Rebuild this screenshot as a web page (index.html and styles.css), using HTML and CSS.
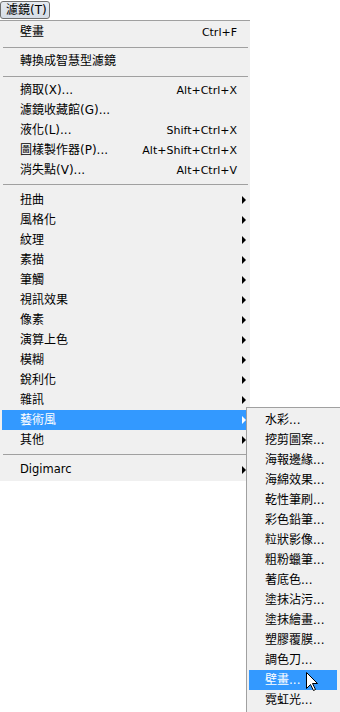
FILE: index.html
```html
<!DOCTYPE html>
<html lang="zh-Hant">
<head>
  <meta charset="UTF-8">
  <title>濾鏡</title>
  <link rel="stylesheet" href="styles.css">
</head>
<body>

  <div class="menubar">
    <span class="menubtn">濾鏡(T)</span>
  </div>

  <div class="menu">
    <div class="item"><span class="label">壁畫</span><span class="key">Ctrl+F</span></div>
    <div class="sep"></div>
    <div class="item"><span class="label">轉換成智慧型濾鏡</span></div>
    <div class="sep"></div>
    <div class="item"><span class="label">摘取(X)...</span><span class="key">Alt+Ctrl+X</span></div>
    <div class="item"><span class="label">濾鏡收藏館(G)...</span></div>
    <div class="item"><span class="label">液化(L)...</span><span class="key">Shift+Ctrl+X</span></div>
    <div class="item"><span class="label">圖樣製作器(P)...</span><span class="key">Alt+Shift+Ctrl+X</span></div>
    <div class="item"><span class="label">消失點(V)...</span><span class="key">Alt+Ctrl+V</span></div>
    <div class="sep wide"></div>
    <div class="item sub"><span class="label">扭曲</span></div>
    <div class="item sub"><span class="label">風格化</span></div>
    <div class="item sub"><span class="label">紋理</span></div>
    <div class="item sub"><span class="label">素描</span></div>
    <div class="item sub"><span class="label">筆觸</span></div>
    <div class="item sub"><span class="label">視訊效果</span></div>
    <div class="item sub"><span class="label">像素</span></div>
    <div class="item sub"><span class="label">演算上色</span></div>
    <div class="item sub"><span class="label">模糊</span></div>
    <div class="item sub"><span class="label">銳利化</span></div>
    <div class="item sub"><span class="label">雜訊</span></div>
    <div class="item sub active"><span class="label">藝術風</span></div>
    <div class="item sub"><span class="label">其他</span></div>
    <div class="sep wide"></div>
    <div class="item sub"><span class="label latin">Digimarc</span></div>
  </div>

  <!-- flyout for 藝術風 -->
  <div class="submenu">
    <div class="item"><span class="label">水彩...</span></div>
    <div class="item"><span class="label">挖剪圖案...</span></div>
    <div class="item"><span class="label">海報邊緣...</span></div>
    <div class="item"><span class="label">海綿效果...</span></div>
    <div class="item"><span class="label">乾性筆刷...</span></div>
    <div class="item"><span class="label">彩色鉛筆...</span></div>
    <div class="item"><span class="label">粒狀影像...</span></div>
    <div class="item"><span class="label">粗粉蠟筆...</span></div>
    <div class="item"><span class="label">著底色...</span></div>
    <div class="item"><span class="label">塗抹沾污...</span></div>
    <div class="item"><span class="label">塗抹繪畫...</span></div>
    <div class="item"><span class="label">塑膠覆膜...</span></div>
    <div class="item"><span class="label">調色刀...</span></div>
    <div class="item active"><span class="label">壁畫...</span></div>
    <div class="item"><span class="label">霓虹光...</span></div>
  </div>

  <svg class="cursor" width="13" height="20" viewBox="0 0 13 20">
    <path d="M0.5 0.5 L0.5 16.5 L4.5 12.5 L7.5 18.5 L9.5 17.5 L6.5 11.5 L11.5 11.5 Z" fill="#fff" stroke="#000" stroke-width="1" stroke-linejoin="miter"/>
  </svg>

</body>
</html>
```

FILE: styles.css
```css
body {
  margin: 0;
  background: #fff;
  font-family: "DejaVu Sans", "Noto Sans CJK TC", sans-serif;
  font-size: 12px;
  color: #000;
  position: relative;
  height: 712px;
  overflow: hidden;
}
.menubar {
  height: 20px;
  display: flex;
  align-items: flex-end;
}
.menubtn {
  box-sizing: border-box;
  width: 50px;
  height: 18px;
  margin-bottom: 1px;
  padding-left: 5px;
  display: flex;
  align-items: center;
  border: 1px solid #707070;
  border-radius: 3px;
  background: linear-gradient(#e6ebf1, #d6dde6);
  line-height: 1;
}
.menu {
  width: 250px;
  background: #f0f0f0;
  border-top: 1px solid #a0a0a0;
  padding: 1px 0;
}
.item {
  height: 20px;
  margin: 0 0 0 2px;
  padding: 0 4px 0 18px;
  display: flex;
  align-items: center;
  line-height: 1;
  white-space: nowrap;
}
.label {
  flex: 1;
}
.key {
  margin-right: 9px;
  font-size: 11px;
}
.latin {
  font-size: 11.5px;
}
.sub::after {
  content: "";
  width: 0;
  height: 0;
  border-left: 4px solid currentColor;
  border-top: 4px solid transparent;
  border-bottom: 4px solid transparent;
}
.active {
  background: #3399ff;
  color: #fff;
}
.sep {
  height: 1px;
  background: #a0a0a0;
  margin: 5px 2px 3px 3px;
}
.sep.wide {
  margin: 4px 2px 5px 3px;
}
.submenu {
  position: absolute;
  left: 246px;
  top: 407px;
  width: 93px;
  background: #f0f0f0;
  border-top: 1px solid #a0a0a0;
  border-left: 1px solid #a0a0a0;
  padding: 2px 0;
}
.submenu .item {
  margin: 0 3px 0 2px;
  padding-left: 16px;
}
.cursor {
  position: absolute;
  left: 306px;
  top: 672px;
}
```
